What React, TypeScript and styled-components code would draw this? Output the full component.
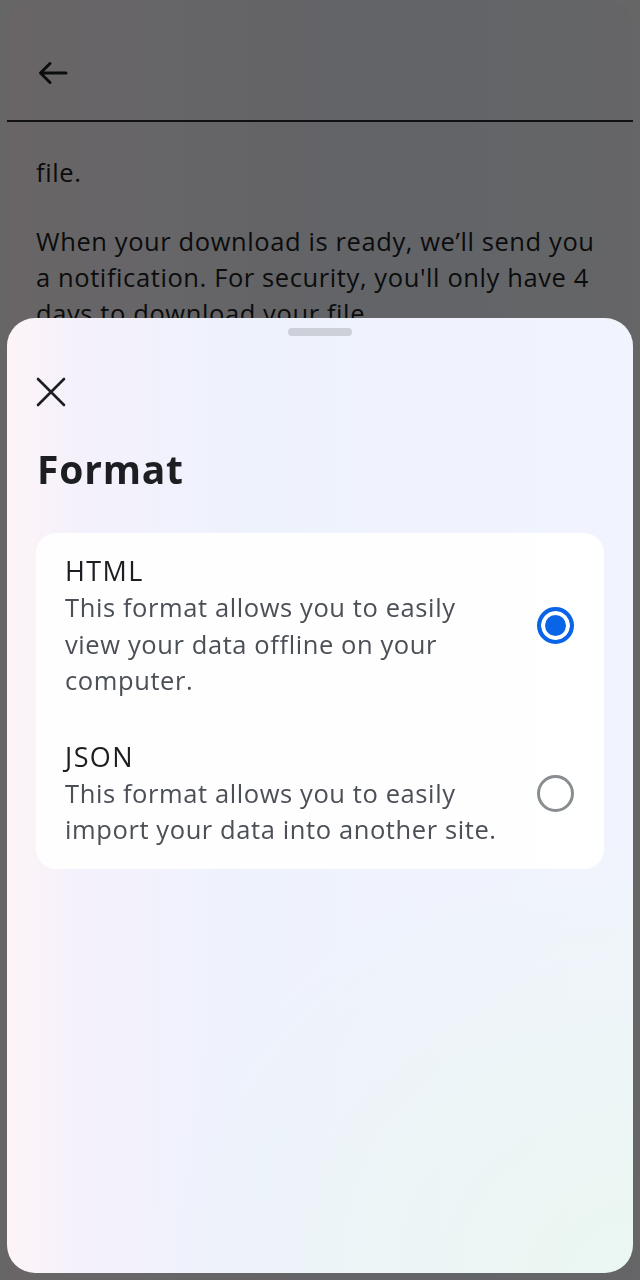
import styled, { createGlobalStyle } from "styled-components";

const GlobalStyle = createGlobalStyle`
  html, body {
    margin: 0;
    padding: 0;
    background: #f4f1f7;
  }
  body {
    font-family: "Open Sans", "Noto Sans", sans-serif;
    -webkit-font-smoothing: antialiased;
  }
  * { box-sizing: border-box; }
`;

type Option = {
  id: string;
  title: string;
  description: string;
};

const options: Option[] = [
  {
    id: "html",
    title: "HTML",
    description: "This format allows you to easily view your data offline on your computer.",
  },
  {
    id: "json",
    title: "JSON",
    description: "This format allows you to easily import your data into another site.",
  },
];

export default function App() {
  const selected = "html";

  return (
    <>
      <GlobalStyle />
      <Device>
        <Screen>
          <TopBar>
            <IconButton aria-label="Back">
              <svg width="30" height="24" viewBox="0 0 30 24" fill="none">
                <path d="M28 12H3M12 2.5L2.5 12L12 21.5" stroke="#1c1e21" strokeWidth="3" strokeLinecap="round" strokeLinejoin="round" />
              </svg>
            </IconButton>
          </TopBar>
          <Body>
            <Paragraph>file.</Paragraph>
            <Paragraph>
              When your download is ready, we’ll send you a notification. For security, you'll only have 4 days to download your file.
            </Paragraph>
          </Body>
        </Screen>
      </Device>

      <Scrim />

      <Sheet>
        <Handle />
        <CloseButton aria-label="Close">
          <svg width="30" height="30" viewBox="0 0 30 30" fill="none">
            <path d="M2 2L28 28M28 2L2 28" stroke="#1c1e21" strokeWidth="2.6" strokeLinecap="round" />
          </svg>
        </CloseButton>
        <SheetTitle>Format</SheetTitle>

        <OptionCard>
          {options.map((o) => (
            <OptionRow key={o.id}>
              <OptionText>
                <OptionTitle>{o.title}</OptionTitle>
                <OptionDescription>{o.description}</OptionDescription>
              </OptionText>
              <Radio $checked={o.id === selected} />
            </OptionRow>
          ))}
        </OptionCard>
      </Sheet>
    </>
  );
}

const Device = styled.div`
  min-height: 1280px;
  padding: 0 7px;
  background: #fbf8fa;
`;

const Screen = styled.div`
  min-height: 1280px;
  border-radius: 26px 26px 0 0;
  background: linear-gradient(90deg, #fff6f8 0%, #f3f3fb 40%, #eef3fd 70%, #f5f6fa 100%);
`;

const TopBar = styled.header`
  height: 122px;
  padding: 61px 0 0 31px;
  border-bottom: 2px solid #2a2a2e;
`;

const IconButton = styled.button`
  display: block;
  padding: 0;
  border: 0;
  background: none;
`;

const Body = styled.div`
  padding: 32px 29px 0;
`;

const Paragraph = styled.p`
  margin: 0 0 33px;
  font-size: 25.5px;
  letter-spacing: 0.6px;
  line-height: 36px;
  color: #1c1e21;
`;

const Scrim = styled.div`
  position: fixed;
  inset: 0;
  background: rgba(0, 0, 0, 0.59);
`;

const Sheet = styled.section`
  position: fixed;
  top: 318px;
  left: 7px;
  right: 7px;
  bottom: 7px;
  padding: 0 29px;
  border-radius: 28px;
  background:
    radial-gradient(ellipse 80% 45% at 100% 100%, rgba(234, 247, 240, 0.95), rgba(234, 247, 240, 0) 100%),
    linear-gradient(90deg, #fdf4f6 0%, #f4f1fc 12%, #eef2fd 38%, #f1f4fd 100%);
  overflow: hidden;
`;

const Handle = styled.div`
  width: 64px;
  height: 8px;
  margin: 10px auto 0;
  border-radius: 4px;
  background: #cdd0d8;
`;

const CloseButton = styled.button`
  display: block;
  margin: 41px 0 0 0;
  padding: 0;
  border: 0;
  background: none;
`;

const SheetTitle = styled.h2`
  margin: 33px 0 0 1px;
  font-size: 39px;
  letter-spacing: 0.8px;
  line-height: 52px;
  font-weight: 700;
  color: #1c1e21;
`;

const OptionCard = styled.div`
  margin-top: 38px;
  padding: 20px 30px 21px 29px;
  border-radius: 20px;
  background: rgba(255, 255, 255, 0.92);
  display: flex;
  flex-direction: column;
  gap: 40px;
`;

const OptionRow = styled.label`
  display: flex;
  align-items: center;
  gap: 24px;
`;

const OptionText = styled.div`
  flex: 1;
  min-width: 0;
`;

const OptionTitle = styled.div`
  font-size: 27px;
  letter-spacing: 1.4px;
  line-height: 36px;
  font-weight: 500;
  color: #1c1e21;
`;

const OptionDescription = styled.div`
  font-size: 25.5px;
  letter-spacing: 0.6px;
  line-height: 36.5px;
  color: #4b4f56;
`;

const Radio = styled.span<{ $checked: boolean }>`
  flex: none;
  width: 37px;
  height: 37px;
  border-radius: 50%;
  border: ${(p) => (p.$checked ? "4px solid #0a64e8" : "3px solid #8a8c90")};
  background: ${(p) => (p.$checked ? "#0a64e8" : "transparent")};
  box-shadow: ${(p) => (p.$checked ? "inset 0 0 0 4px #ffffff" : "none")};
`;
